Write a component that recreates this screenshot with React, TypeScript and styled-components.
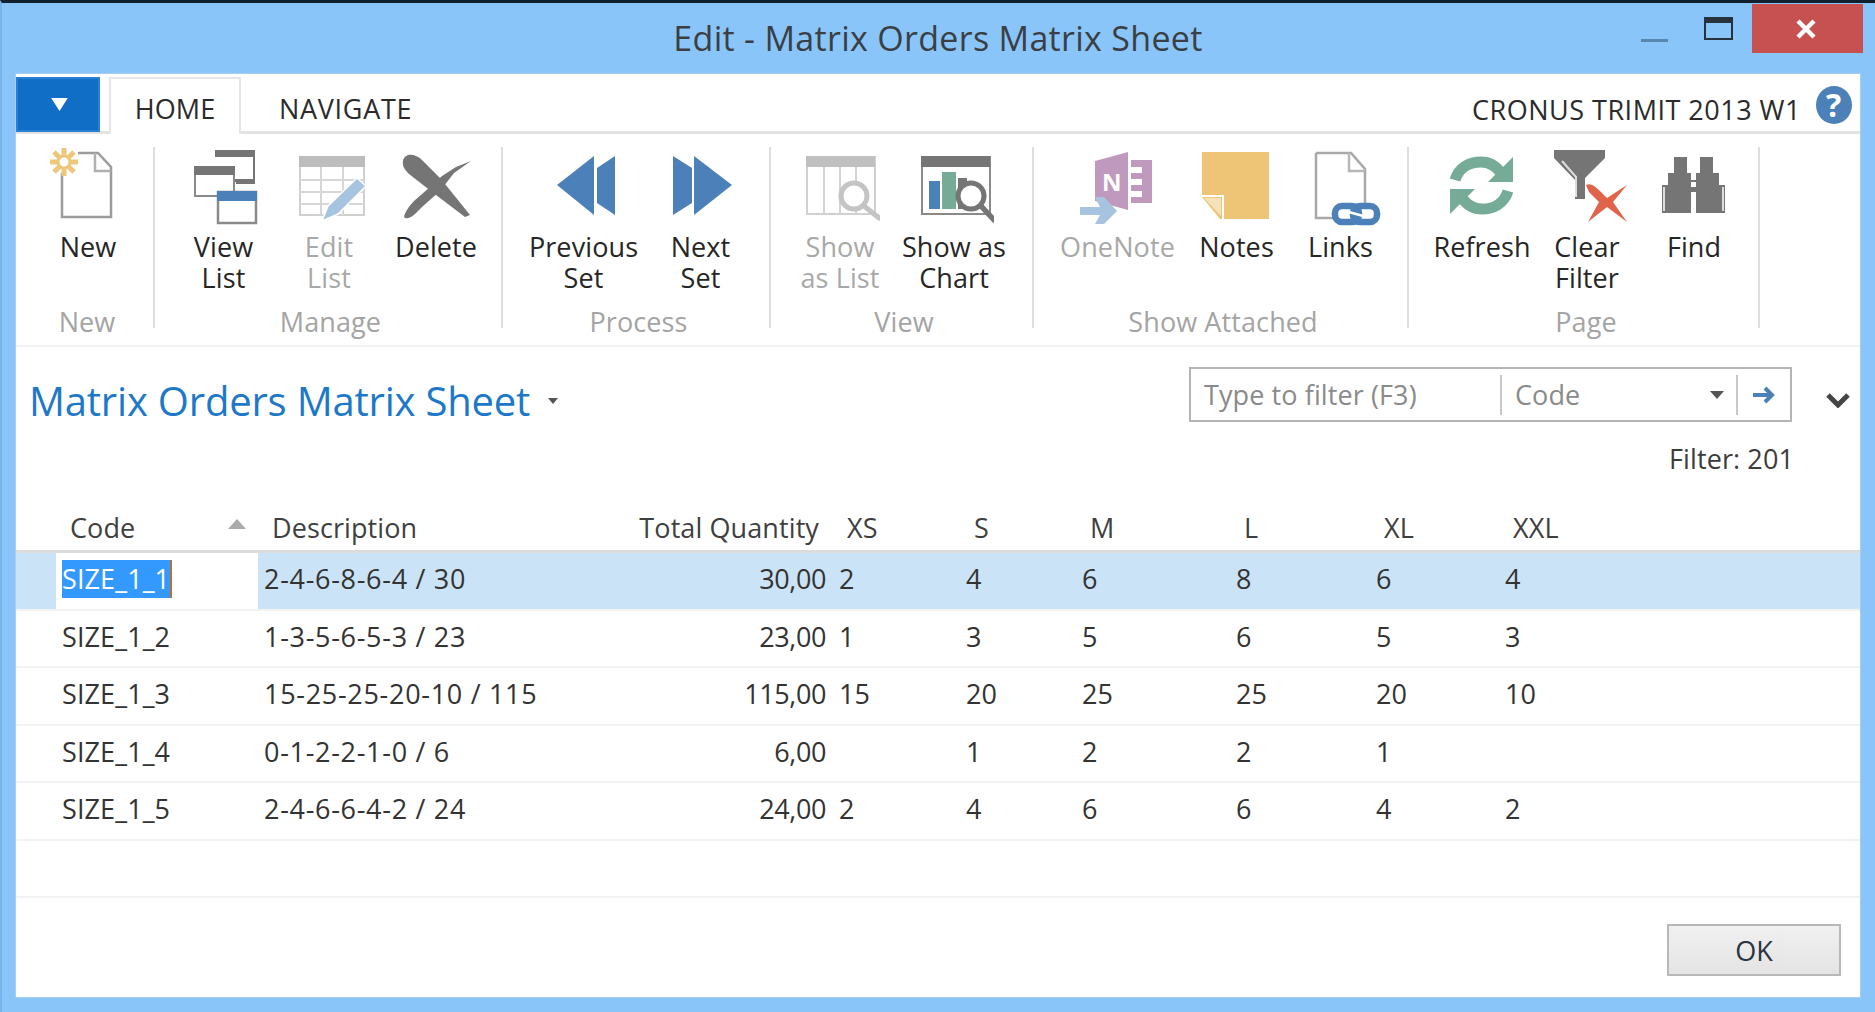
import React from "react";
import styled, { createGlobalStyle } from "styled-components";

const GRAY = "#757575";
const BLUE = "#4c80b8";
const OFF = "#c4c4c4";
const TEAL = "#75ab97";
const COLUMNS = "40px 202px 302px 273px 127px 116px 154px 140px 129px 1fr";

const Global = createGlobalStyle`
  html, body {
    margin: 0;
    width: 1875px;
    height: 1012px;
    overflow: hidden;
    background: #8ac5f9;
    font-family: "Open Sans", "Noto Sans", sans-serif;
    font-size: 27px;
    letter-spacing: 0.1px;
    color: #333;
  }
`;

const Window = styled.div`
  width: 1875px;
  height: 1012px;
  box-sizing: border-box;
  border-top: 3px solid #10202e;
  border-left: 2px solid #76b4ec;
  padding: 0 13px 0 13px;
  display: flex;
  flex-direction: column;
`;
const TitleBar = styled.div`
  height: 70px;
  flex: none;
  display: grid;
  grid-template-columns: 1fr auto 1fr;
  margin-right: -13px;
`;
const Caption = styled.div`
  font-size: 34px;
  line-height: 70px;
  color: #3a3f44;
  letter-spacing: 0.3px;
  margin-right: 14px;
`;
const Controls = styled.div`
  display: flex;
  justify-content: flex-end;
  align-items: flex-start;
  padding-right: 12px;
`;
const Minimize = styled.div`
  width: 27px;
  height: 3px;
  background: #5a87ae;
  margin: 36px 36px 0 0;
`;
const Maximize = styled.div`
  width: 29px;
  height: 23px;
  box-sizing: border-box;
  border: 2px solid #26323c;
  border-top-width: 6px;
  margin: 14px 19px 0 0;
`;
const CloseButton = styled.div`
  width: 111px;
  height: 49px;
  margin-top: 1px;
  padding-right: 4px;
  box-sizing: border-box;
  background: #c75050;
  display: flex;
  align-items: center;
  justify-content: center;
`;
const Panel = styled.div`
  width: 1846px;
  height: 925px;
  box-sizing: border-box;
  background: #fff;
  border: 1px solid #a9cdec;
  display: flex;
  flex-direction: column;
`;
const TabStrip = styled.div`
  height: 60px;
  flex: none;
  box-sizing: border-box;
  border-bottom: 3px solid #e2e2e2;
  padding-top: 3px;
  display: flex;
`;
const AppMenu = styled.div`
  width: 84px;
  height: 55px;
  box-sizing: border-box;
  background: #106ec6;
  border: 2px solid #2a80d2;
  padding-left: 3px;
  display: flex;
  align-items: center;
  justify-content: center;
`;
const Tab = styled.div<{ $active?: boolean }>`
  height: ${({ $active }) => ($active ? "57px" : "54px")};
  width: ${({ $active }) => ($active ? "132px" : "auto")};
  box-sizing: border-box;
  margin-left: ${({ $active }) => ($active ? "9px" : "0")};
  padding: 0 ${({ $active }) => ($active ? "0" : "38px")};
  text-align: center;
  line-height: ${({ $active }) => ($active ? "60px" : "64px")};
  letter-spacing: ${({ $active }) => ($active ? "0.1px" : "0.7px")};
  color: #2b2b2b;
  background: #fff;
  ${({ $active }) => $active && "border: 2px solid #e6e6e6; border-bottom: 0;"}
`;
const Company = styled.div`
  margin-left: auto;
  display: flex;
  align-items: flex-start;
  padding-right: 8px;
  line-height: 66px;
  letter-spacing: 0.5px;
  color: #2b2b2b;
  gap: 15px;
`;
const HelpIcon = styled.div`
  width: 36px;
  height: 38px;
  margin-top: 9px;
  border-radius: 50%;
  background: ${BLUE};
  color: #fff;
  font-size: 32px;
  font-weight: 700;
  line-height: 38px;
  text-align: center;
`;
const Ribbon = styled.div`
  height: 213px;
  flex: none;
  box-sizing: border-box;
  padding-top: 13px;
  border-bottom: 2px solid #f2f2f2;
  display: flex;
`;
const Group = styled.div<{ $width: number }>`
  width: ${({ $width }) => $width}px;
  height: 181px;
  flex: none;
  box-sizing: border-box;
  border-right: 2px solid #dedede;
  display: flex;
  flex-direction: column;
`;
const GroupButtons = styled.div<{ $pad: number }>`
  display: flex;
  padding-left: ${({ $pad }) => $pad}px;
  flex: 1;
`;
const GroupLabel = styled.div`
  text-align: center;
  padding-left: 5px;
  line-height: 31px;
  margin-bottom: -9px;
  color: #a4a4a4;
`;
const RibbonButton = styled.div<{ $width: number; $off?: boolean }>`
  width: ${({ $width }) => $width}px;
  flex: none;
  display: flex;
  flex-direction: column;
  align-items: center;
  text-align: center;
  line-height: 31px;
  color: ${({ $off }) => ($off ? "#a8a8a8" : "#262626")};
`;
const IconBox = styled.svg`
  display: block;
  width: 80px;
  height: 80px;
  margin-bottom: 4px;
  flex: none;
`;
const PageHead = styled.div`
  flex: none;
  display: flex;
  justify-content: space-between;
  padding: 20px 10px 0 13px;
`;
const PageTitle = styled.div`
  display: flex;
  align-items: center;
  gap: 18px;
  margin-top: 6px;
  height: 55px;
  font-size: 40px;
  color: #1e78c8;
  letter-spacing: -0.2px;
`;
const FilterArea = styled.div`
  display: flex;
  gap: 34px;
`;
const FilterBox = styled.div`
  width: 603px;
  height: 55px;
  box-sizing: border-box;
  border: 2px solid #b4b4b4;
  display: flex;
  align-items: center;
  color: #8a8a8a;
`;
const FilterCell = styled.div<{ $width: number }>`
  width: ${({ $width }) => $width}px;
  height: 40px;
  line-height: 36px;
  flex: none;
  box-sizing: border-box;
  padding-left: 13px;
  display: flex;
  align-items: center;
  justify-content: space-between;
  border-right: 2px solid #c8c8c8;
`;
const FilterGo = styled.div`
  flex: 1;
  display: flex;
  justify-content: center;
`;
const CaretDown = styled.svg`
  display: block;
  width: 14px;
  height: 8px;
  margin-right: 12px;
`;
const ExpandIcon = styled.svg`
  display: block;
  width: 24px;
  height: 16px;
  margin-top: 25px;
`;
const FilterNote = styled.div`
  flex: none;
  text-align: right;
  line-height: 31px;
  padding: 15px 66px 0 0;
  color: #3c3c3c;
`;
const GridRow = styled.div<{ $selected?: boolean }>`
  display: grid;
  grid-template-columns: ${COLUMNS};
  height: 57.5px;
  box-sizing: border-box;
  align-items: stretch;
  border-bottom: 2px solid #f2f2f2;
  background: ${({ $selected }) => ($selected ? "#cbe3f6" : "#fff")};
`;
const HeadRow = styled.div`
  display: grid;
  grid-template-columns: ${COLUMNS};
  flex: none;
  margin-top: 38px;
  height: 41px;
  box-sizing: border-box;
  line-height: 31px;
  border-bottom: 3px solid #dcdcdc;
  color: #3f3f3f;
`;
const HeadCell = styled.div<{ $right?: boolean }>`
  padding: 0 14px;
  text-align: ${({ $right }) => ($right ? "right" : "left")};
  display: flex;
  justify-content: ${({ $right }) => ($right ? "flex-end" : "space-between")};
  align-items: flex-start;
  white-space: nowrap;
`;
const SortMark = styled.svg`
  display: block;
  width: 18px;
  height: 10px;
  margin: 7px -2px 0 0;
`;
const Cell = styled.div<{ $right?: boolean; $current?: boolean; $wide?: boolean }>`
  padding: 0 ${({ $right }) => ($right ? "7px" : "6px")};
  line-height: 52px;
  text-align: ${({ $right }) => ($right ? "right" : "left")};
  background: ${({ $current }) => ($current ? "#fff" : "transparent")};
  letter-spacing: ${({ $wide, $right }) => ($wide ? "0.7px" : $right ? "-0.4px" : "0.1px")};
  white-space: nowrap;
`;
const SelectedText = styled.span`
  display: inline-block;
  height: 38px;
  line-height: 38px;
  background: #3399ff;
  color: #fff;
  border-right: 2px solid #b8702a;
`;
const Footer = styled.div`
  display: flex;
  justify-content: flex-end;
  padding: 26px 19px 0 0;
`;
const OkButton = styled.div`
  width: 174px;
  height: 52px;
  box-sizing: border-box;
  border: 2px solid #b8b8b8;
  background: linear-gradient(#f0f0f0, #e4e4e4);
  text-align: center;
  line-height: 50px;
  color: #2b3440;
`;

const NewIcon = () => (
  <IconBox viewBox="0 0 80 80">
    <path d="M14 26V70H63V20L50 6H30" fill="#fff" stroke="#9c9c9c" strokeWidth="2.5" />
    <path d="M47 6V24H63" fill="none" stroke="#b0b0b0" strokeWidth="2.5" />
    <g stroke="#edc77c" strokeWidth="5">
      <path d="M16 1V29M2 15H30M6 5L26 25M26 5L6 25" />
    </g>
    <circle cx="16" cy="15" r="6" fill="#fff" stroke="#edc77c" strokeWidth="3" />
  </IconBox>
);
const ViewListIcon = () => (
  <IconBox viewBox="0 0 80 80">
    <path d="M31 3H71V37H52V10H31Z" fill={GRAY} />
    <rect x="33" y="10" width="36" height="25" fill="#fff" />
    <path d="M40 28V35H69V32H40Z" fill={GRAY} />
    <rect x="11" y="20" width="39" height="29" fill="#fff" stroke="#8a8a8a" strokeWidth="2" />
    <rect x="10" y="19" width="41" height="9" fill={GRAY} />
    <rect x="34" y="45" width="38" height="31" fill="#fff" stroke="#8a8a8a" strokeWidth="2.5" />
    <rect x="33" y="44" width="40" height="10" fill={BLUE} />
  </IconBox>
);
const EditListIcon = () => (
  <IconBox viewBox="0 0 80 80">
    <rect x="11" y="10" width="64" height="58" fill="#fff" stroke="#d0d0d0" strokeWidth="2" />
    <rect x="10" y="9" width="66" height="11" fill="#bdbdbd" />
    <path d="M11 33H75M11 45H75M11 57H75M32 20V68M54 20V68" stroke="#d6d6d6" strokeWidth="2" />
    <path d="M33 74L39 59L68 31L77 39L49 67Z" fill="#a6c4e0" stroke="#fff" strokeWidth="1.5" />
  </IconBox>
);
const DeleteIcon = () => (
  <IconBox viewBox="0 0 80 80">
    <path
      d="M7 14C9 5 20 7 26 13L45 32L74 68L69 70L40 48L13 27C9 23 6 19 7 14Z"
      fill={GRAY}
    />
    <path
      d="M75 14L60 20L46 29L34 40L18 54C12 60 6 70 9 71C14 73 20 66 26 60L44 44L58 26Z"
      fill={GRAY}
    />
  </IconBox>
);
const PreviousIcon = () => (
  <IconBox viewBox="0 0 80 80">
    <path d="M50 9V68L13 38Z" fill={BLUE} />
    <path d="M71 9V68L53 56V21Z" fill={BLUE} />
  </IconBox>
);
const NextIcon = () => (
  <IconBox viewBox="0 0 80 80">
    <path d="M12 9L31 21V56L12 68Z" fill={BLUE} />
    <path d="M33 9L71 38L33 68Z" fill={BLUE} />
  </IconBox>
);
const ShowListIcon = () => (
  <IconBox viewBox="0 0 80 80">
    <rect x="7" y="10" width="68" height="57" fill="#fff" stroke="#d0d0d0" strokeWidth="2" />
    <rect x="6" y="9" width="69" height="11" fill="#c0c0c0" />
    <path d="M24 20V67M40 20V67M56 20V67" stroke="#d4d4d4" strokeWidth="2" />
    <circle cx="54" cy="49" r="13" fill="#fff" stroke={OFF} strokeWidth="5" />
    <path d="M64 59L79 71" stroke={OFF} strokeWidth="5" strokeLinecap="round" />
  </IconBox>
);
const ChartIcon = () => (
  <IconBox viewBox="0 0 80 80">
    <rect x="8" y="10" width="68" height="57" fill="#fff" stroke="#8a8a8a" strokeWidth="2" />
    <rect x="7" y="9" width="69" height="11" fill={GRAY} />
    <rect x="15" y="34" width="11" height="28" fill={BLUE} />
    <rect x="28" y="25" width="14" height="37" fill={TEAL} />
    <rect x="44" y="31" width="9" height="31" fill={GRAY} />
    <circle cx="57" cy="49" r="13" fill="#fff" stroke={GRAY} strokeWidth="5" />
    <path d="M67 59L80 73" stroke={GRAY} strokeWidth="5.5" strokeLinecap="round" />
  </IconBox>
);
const OneNoteIcon = () => (
  <IconBox viewBox="0 0 80 80">
    <path d="M17 14L50 5V63L17 54Z" fill="#c09abe" />
    <text x="24" y="44" fontFamily="Open Sans" fontSize="24" fontWeight="700" fill="#fff">
      N
    </text>
    <path d="M53 13H74V56H53V50H64V44H53V38H64V32H53V26H64V20H53Z" fill="#c09abe" />
    <path d="M2 60H22L17 50H26L39 64L26 77H17L22 68H2Z" fill="#a6c4e0" />
  </IconBox>
);
const NotesIcon = () => (
  <IconBox viewBox="0 0 80 80">
    <path d="M5 5H72V72H23L5 50Z" fill="#eec577" />
    <path d="M5 49H26V72" fill="none" stroke="#fff" strokeWidth="2" />
    <path d="M7 51H24V69Z" fill="#f6e2b8" />
  </IconBox>
);
const LinksIcon = () => (
  <IconBox viewBox="0 0 80 80">
    <path d="M15 6H50L64 22V60M36 71H15V6" fill="#fff" stroke="#a8a8a8" strokeWidth="2.5" />
    <path d="M48 6V24H64" fill="none" stroke="#b8b8b8" strokeWidth="2.5" />
    <rect x="34" y="59" width="24" height="16" rx="7" fill="none" stroke={BLUE} strokeWidth="6.5" />
    <rect x="52" y="59" width="24" height="16" rx="7" fill="none" stroke={BLUE} strokeWidth="6.5" />
    <path d="M44 64L66 70" stroke="#fff" strokeWidth="2.5" />
  </IconBox>
);
const RefreshIcon = () => (
  <IconBox viewBox="0 0 80 80">
    <g fill="none" stroke={TEAL} strokeWidth="11">
      <path d="M13 33C17 20 28 15 39 15C48 15 54 19 59 26" />
      <path d="M66 44C62 57 51 62 40 62C31 62 25 58 20 51" />
    </g>
    <path d="M71 10V35H46Z" fill={TEAL} />
    <path d="M8 42H33L8 67Z" fill={TEAL} />
  </IconBox>
);
const ClearFilterIcon = () => (
  <IconBox viewBox="0 0 80 80">
    <path d="M7 3H58V11L38 31V52H28V33L7 11Z" fill={GRAY} />
    <path d="M15 14L29 30V50" fill="none" stroke="#ddd" strokeWidth="2" />
    <path
      d="M39 38C44 35 50 41 54 45L60 51L80 38L66 55L80 75L60 60L41 75L52 55L42 45Z"
      fill="#e0644a"
    />
  </IconBox>
);
const FindIcon = () => (
  <IconBox viewBox="0 0 80 80">
    <path d="M20 10H33V26H37V66H8V38H14V26H20Z" fill={GRAY} />
    <path d="M59 10H46V26H42V66H71V38H65V26H59Z" fill={GRAY} />
    <rect x="36" y="33" width="7" height="12" fill={GRAY} />
    <rect x="37" y="35" width="5" height="5" fill="#fff" />
    <path d="M10 40V64M69 40V64" stroke="#fff" strokeWidth="1.5" />
  </IconBox>
);

const groups = [
  {
    label: "New",
    width: 139,
    pad: 17,
    buttons: [{ lines: ["New"], width: 110, Icon: NewIcon }],
  },
  {
    label: "Manage",
    width: 348,
    pad: 16,
    buttons: [
      { lines: ["View", "List"], width: 105, Icon: ViewListIcon },
      { lines: ["Edit", "List"], width: 106, Icon: EditListIcon, off: true },
      { lines: ["Delete"], width: 108, Icon: DeleteIcon },
    ],
  },
  {
    label: "Process",
    width: 268,
    pad: 22,
    buttons: [
      { lines: ["Previous", "Set"], width: 117, Icon: PreviousIcon },
      { lines: ["Next", "Set"], width: 117, Icon: NextIcon },
    ],
  },
  {
    label: "View",
    width: 263,
    pad: 12,
    buttons: [
      { lines: ["Show", "as List"], width: 114, Icon: ShowListIcon, off: true },
      { lines: ["Show as", "Chart"], width: 114, Icon: ChartIcon },
    ],
  },
  {
    label: "Show Attached",
    width: 375,
    pad: 24,
    buttons: [
      { lines: ["OneNote"], width: 119, Icon: OneNoteIcon, off: true },
      { lines: ["Notes"], width: 119, Icon: NotesIcon },
      { lines: ["Links"], width: 89, Icon: LinksIcon },
    ],
  },
  {
    label: "Page",
    width: 351,
    pad: 21,
    buttons: [
      { lines: ["Refresh"], width: 104, Icon: RefreshIcon },
      { lines: ["Clear", "Filter"], width: 106, Icon: ClearFilterIcon },
      { lines: ["Find"], width: 108, Icon: FindIcon },
    ],
  },
];

const headers = ["Code", "Description", "Total Quantity", "XS", "S", "M", "L", "XL", "XXL"];
const rows = [
  ["SIZE_1_1", "2-4-6-8-6-4 / 30", "30,00", "2", "4", "6", "8", "6", "4"],
  ["SIZE_1_2", "1-3-5-6-5-3 / 23", "23,00", "1", "3", "5", "6", "5", "3"],
  ["SIZE_1_3", "15-25-25-20-10 / 115", "115,00", "15", "20", "25", "25", "20", "10"],
  ["SIZE_1_4", "0-1-2-2-1-0 / 6", "6,00", "", "1", "2", "2", "1", ""],
  ["SIZE_1_5", "2-4-6-6-4-2 / 24", "24,00", "2", "4", "6", "6", "4", "2"],
  ["", "", "", "", "", "", "", "", ""],
];

export default function App() {
  return (
    <Window>
      <Global />
      <TitleBar>
        <div />
        <Caption>Edit - Matrix Orders Matrix Sheet</Caption>
        <Controls>
          <Minimize />
          <Maximize />
          <CloseButton>
            <svg width="22" height="22" viewBox="0 0 22 22">
              <path d="M3 3L19 19M19 3L3 19" stroke="#fff" strokeWidth="4.5" />
            </svg>
          </CloseButton>
        </Controls>
      </TitleBar>
      <Panel>
        <TabStrip>
          <AppMenu>
            <svg width="17" height="13" viewBox="0 0 18 14">
              <path d="M0 0H18L9 14Z" fill="#fff" />
            </svg>
          </AppMenu>
          <Tab $active>HOME</Tab>
          <Tab>NAVIGATE</Tab>
          <Company>
            CRONUS TRIMIT 2013 W1
            <HelpIcon>?</HelpIcon>
          </Company>
        </TabStrip>
        <Ribbon>
          {groups.map((group) => (
            <Group key={group.label} $width={group.width}>
              <GroupButtons $pad={group.pad}>
                {group.buttons.map(({ lines, width, Icon, off }: any) => (
                  <RibbonButton key={lines.join(" ")} $width={width} $off={off}>
                    <Icon />
                    {lines.map((line: string) => (
                      <div key={line}>{line}</div>
                    ))}
                  </RibbonButton>
                ))}
              </GroupButtons>
              <GroupLabel>{group.label}</GroupLabel>
            </Group>
          ))}
        </Ribbon>
        <PageHead>
          <PageTitle>
            Matrix Orders Matrix Sheet
            <svg width="10" height="6" viewBox="0 0 10 6">
              <path d="M0 0H10L5 6Z" fill="#555" />
            </svg>
          </PageTitle>
          <FilterArea>
            <FilterBox>
              <FilterCell $width={311}>Type to filter (F3)</FilterCell>
              <FilterCell $width={236}>
                Code
                <CaretDown viewBox="0 0 14 8">
                  <path d="M0 0H14L7 8Z" fill="#555" />
                </CaretDown>
              </FilterCell>
              <FilterGo>
                <svg width="24" height="20" viewBox="0 0 24 20">
                  <path d="M1 10H20M13 3L20 10L13 17" fill="none" stroke={BLUE} strokeWidth="4" />
                </svg>
              </FilterGo>
            </FilterBox>
            <ExpandIcon viewBox="0 0 24 16">
              <path d="M2 3L12 13L22 3" fill="none" stroke="#444" strokeWidth="5" />
            </ExpandIcon>
          </FilterArea>
        </PageHead>
        <FilterNote>Filter: 201</FilterNote>
        <HeadRow>
          <div />
          {headers.map((name, index) => (
            <HeadCell key={name} $right={index === 2}>
              {name}
              {index === 0 && (
                <SortMark viewBox="0 0 18 10">
                  <path d="M0 10L9 0L18 10Z" fill="#aaa" />
                </SortMark>
              )}
            </HeadCell>
          ))}
        </HeadRow>
        {rows.map((row, rowIndex) => (
          <GridRow key={rowIndex} $selected={rowIndex === 0}>
            <div />
            {row.map((value, index) => (
              <Cell
                key={index}
                $right={index === 2}
                $wide={index === 1}
                $current={rowIndex === 0 && index === 0}
              >
                {rowIndex === 0 && index === 0 ? <SelectedText>{value}</SelectedText> : value}
              </Cell>
            ))}
          </GridRow>
        ))}
        <Footer>
          <OkButton>OK</OkButton>
        </Footer>
      </Panel>
    </Window>
  );
}
